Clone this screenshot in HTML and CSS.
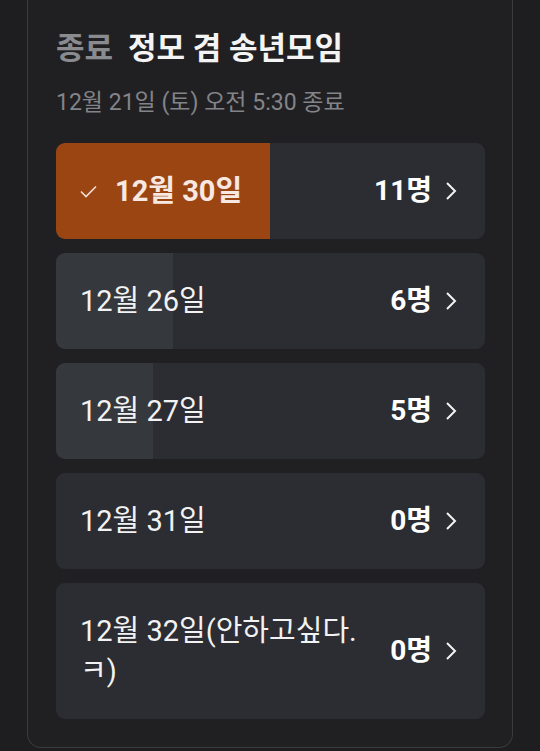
FILE: index.html
```html
<!DOCTYPE html>
<html lang="ko">
<head>
  <meta charset="UTF-8" />
  <title>정모 겸 송년모임</title>
  <link rel="stylesheet" href="styles.css">
</head>
<body>

  <section class="poll">
    <h1 class="poll-title"><span class="state">종료</span>정모 겸 송년모임</h1>
    <p class="poll-meta">12월 21일 (토) 오전 5:30 종료</p>

    <ul class="options">
      <li class="option picked" style="--pct: 50%">
        <span class="label">
          <svg class="check" width="17" height="13" viewBox="0 0 17 13"><polyline points="1,6.5 6,11.5 16,1.5" /></svg>
          12월 30일
        </span>
        <span class="count">11명</span>
        <svg class="chev" width="12" height="20" viewBox="0 0 12 20"><polyline points="2,2 10,10 2,18" /></svg>
      </li>
      <li class="option" style="--pct: 27.3%">
        <span class="label">12월 26일</span>
        <span class="count">6명</span>
        <svg class="chev" width="12" height="20" viewBox="0 0 12 20"><polyline points="2,2 10,10 2,18" /></svg>
      </li>
      <li class="option" style="--pct: 22.7%">
        <span class="label">12월 27일</span>
        <span class="count">5명</span>
        <svg class="chev" width="12" height="20" viewBox="0 0 12 20"><polyline points="2,2 10,10 2,18" /></svg>
      </li>
      <li class="option" style="--pct: 0%">
        <span class="label">12월 31일</span>
        <span class="count">0명</span>
        <svg class="chev" width="12" height="20" viewBox="0 0 12 20"><polyline points="2,2 10,10 2,18" /></svg>
      </li>
      <li class="option" style="--pct: 0%">
        <span class="label">12월 32일(안하고싶다.ㅋ)</span>
        <span class="count">0명</span>
        <svg class="chev" width="12" height="20" viewBox="0 0 12 20"><polyline points="2,2 10,10 2,18" /></svg>
      </li>
    </ul>
  </section>

</body>
</html>
```

FILE: styles.css
```css
body {
  margin: 0;
  background: #1e1e20;
  color: #f2f2f2;
  font-family: Roboto, 'Noto Sans CJK KR', sans-serif;
}

.poll {
  margin: 0 27px;
  padding: 27px 27px 28px 28px;
  background: #202022;
  border: 1px solid #3b3b3e;
  border-top: 0;
  border-radius: 0 0 14px 14px;
}

.poll-title {
  margin: 0;
  font-size: 31px;
  line-height: 44px;
  font-weight: bold;
  color: #f4f4f5;
}

.state {
  color: #8a8b8f;
  margin-right: 15px;
}

.poll-meta {
  margin: 16px 0 0;
  font-size: 23px;
  line-height: 32px;
  color: #838489;
}

.options {
  list-style: none;
  margin: 24px 0 0;
  padding: 0;
  display: flex;
  flex-direction: column;
  gap: 14px;
}

.option {
  --fill: #35383d;
  display: flex;
  align-items: center;
  padding: 28px 28px 28px 24px;
  border-radius: 9px;
  background: linear-gradient(to right, var(--fill) var(--pct), #2b2d32 var(--pct));
  font-size: 29px;
  line-height: 40px;
}

.option.picked {
  --fill: #9b4513;
}

.label {
  flex: 1;
  display: flex;
  align-items: center;
  margin-right: 30px;
}

.picked .label {
  font-weight: bold;
  color: #f7e8e2;
}

.check {
  margin-right: 18px;
  fill: none;
  stroke: #f3ded6;
  stroke-width: 1.6;
}

.count {
  font-size: 28px;
  font-weight: bold;
  color: #fff;
}

.chev {
  margin-left: 13px;
  fill: none;
  stroke: #f2f2f2;
  stroke-width: 2;
}
```
